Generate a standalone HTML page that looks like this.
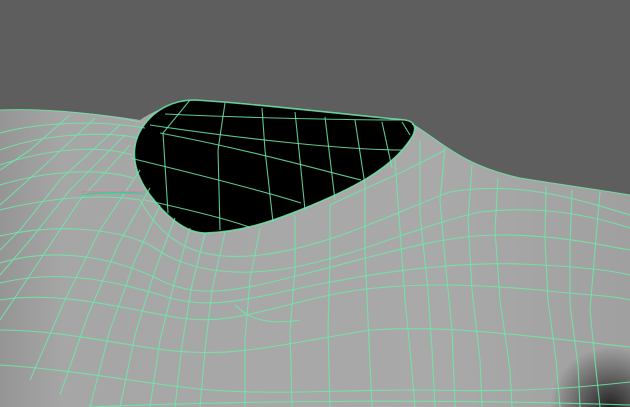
<!DOCTYPE html><html><head><style>html,body{margin:0;padding:0;background:#5e5e5e;overflow:hidden}svg{display:block}</style></head><body>
<svg width="630" height="407" viewBox="0 0 630 407" xmlns="http://www.w3.org/2000/svg">
<defs>
<linearGradient id="g1" x1="0" y1="0" x2="1" y2="0">
<stop offset="0" stop-color="#959595"/><stop offset="0.1" stop-color="#a6a6a6"/><stop offset="0.7" stop-color="#a9a9a9"/><stop offset="1" stop-color="#a0a0a0"/></linearGradient>
<radialGradient id="sh" cx="610" cy="407" r="60" gradientUnits="userSpaceOnUse"><stop offset="0" stop-color="#222"/><stop offset="1" stop-color="#222" stop-opacity="0"/></radialGradient>
</defs>
<rect width="630" height="407" fill="#5e5e5e"/>
<path d="M0,110 C50,108 110,115 140,120 C170,100 200,98 250,104 C320,110 380,118 412,124 C440,140 460,165 520,178 C570,186 600,190 630,195 L630,407 L0,407Z" fill="url(#g1)"/>
<rect x="530" y="340" width="100" height="67" fill="url(#sh)"/>
<path d="M142,128 C155,108 175,100 195,100 C260,104 340,114 405,120 C418,122 416,132 410,140 C390,170 350,190 300,210 C270,222 240,232 205,233 C185,233 165,215 150,195 C135,175 128,150 142,128Z" fill="#000"/>
<g fill="none" stroke="#6ee8a8" stroke-width="1.1" stroke-opacity="0.85">
<path d="M142,128 C155,108 175,100 195,100 C260,104 340,114 405,120 C418,122 416,132 410,140 C390,170 350,190 300,210 C270,222 240,232 205,233 C185,233 165,215 150,195 C135,175 128,150 142,128Z" stroke-width="1.6"/>
<path d="M0,110 C50,108 110,115 140,122"/>
<path d="M412,124 C440,140 460,165 520,178 C570,186 600,190 630,195"/>
<path d="M190,100 L163,133 L168,213"/><path d="M225,103 L218,150 L220,230"/><path d="M262,108 L265,150 L273,222"/><path d="M295,112 L300,160 L305,210"/><path d="M325,117 L335,200"/><path d="M355,120 L365,185"/><path d="M382,122 L392,168"/><path d="M402,122 L410,135"/>
<path d="M150,125 C250,140 350,150 402,150"/><path d="M160,133 C250,150 320,170 361,180"/><path d="M130,158 C200,175 260,190 301,203"/><path d="M145,200 C190,210 230,220 249,227"/><path d="M165,114 C250,118 350,120 404,120"/>
<path d="M0,133 C40,122 100,120 145,128"/>
<path d="M0,150 C40,135 100,130 138,138"/>
<path d="M0,165 C50,148 100,145 132,155"/>
<path d="M0,185 C50,170 100,168 133,178"/>
<path d="M0,210 C60,195 110,195 140,200 C165,245 200,262 260,255 C330,247 400,210 450,192 C520,180 580,200 630,215"/>
<path d="M0,236 C60,222 120,230 150,245 C185,270 230,278 290,268 C360,255 420,225 480,212 C540,205 590,215 630,228"/>
<path d="M0,263 C60,245 120,260 160,280 C200,300 240,290 300,275 C380,255 440,235 500,235 C560,235 600,245 630,250"/>
<path d="M0,283 C60,268 120,282 170,298 C215,310 250,298 315,285 C390,270 460,262 520,264 C570,266 610,270 630,275"/>
<path d="M0,300 C60,290 130,310 180,318 C230,325 260,310 330,295 C400,280 480,285 540,290 C580,295 610,295 630,300"/>
<path d="M0,330 C70,330 140,350 190,352 C240,355 280,345 370,330 C450,325 520,335 630,347"/>
<path d="M0,365 C80,370 150,385 210,390 C280,395 330,390 420,390 C500,392 560,390 630,382"/>
<path d="M90,407 C200,402 420,398 630,405"/>
<path d="M445,148 L440,200 L445,260 L452,330 L455,407"/><path d="M472,165 L468,220 L472,290 L480,360 L482,407"/><path d="M498,178 L495,230 L500,300 L510,370 L512,407"/><path d="M546,186 L545,240 L548,300 L556,360 L560,407"/><path d="M572,190 L570,245 L570,305 L578,365 L580,407"/><path d="M600,192 L595,250 L590,310 L596,370 L600,407"/>
<path d="M420,140 L420,215 L428,290 L432,350 L435,407"/>
<path d="M395,160 L400,230 L405,300 L410,350 L415,407"/><path d="M365,185 L365,250 L368,320 L372,407"/><path d="M330,205 L330,260 L328,330 L330,407"/><path d="M295,215 L295,270 L290,330 L292,407"/><path d="M260,228 L250,280 L245,340 L245,407"/><path d="M225,232 L212,290 L205,350 L200,407"/><path d="M205,233 L192,285 L182,345 L175,407"/><path d="M190,228 L175,280 L160,340 L150,407"/><path d="M175,218 L155,270 L135,335 L120,407"/><path d="M160,205 L135,260 L110,330 L90,407"/><path d="M150,188 L118,245 L88,315 L60,395"/><path d="M140,170 L100,230 L65,300 L30,380"/><path d="M130,145 L80,200 L40,260 L0,320"/><path d="M125,135 L70,190 L30,240 L0,275"/><path d="M120,125 L60,180 L20,230 L0,250"/><path d="M95,118 L45,165 L0,205"/><path d="M70,115 L30,150 L0,170"/>
<path d="M330,205 C360,190 400,175 445,150"/>
<path d="M235,305 C250,320 270,325 300,320"/>
</g>
<path d="M82,192 L145,192" stroke="#e27aa0" stroke-width="1.2"/>
<path d="M82,195 C100,192 120,192 145,194" stroke="#2fd39a" stroke-width="1.3" fill="none"/>
</svg></body></html>
